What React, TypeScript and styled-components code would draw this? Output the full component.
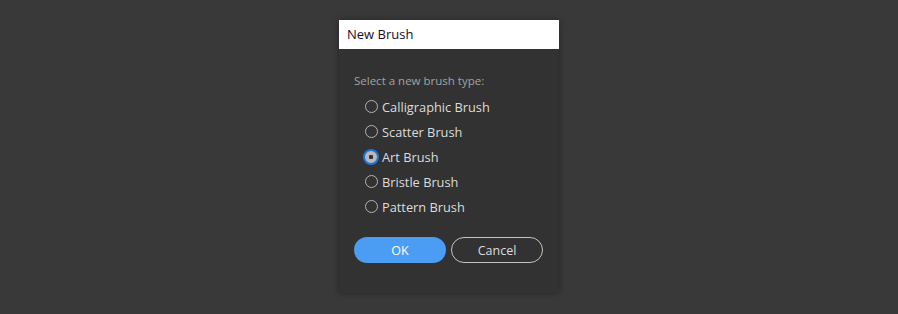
import { useState } from 'react'
import styled, { createGlobalStyle } from 'styled-components'

const BRUSH_TYPES = [
  'Calligraphic Brush',
  'Scatter Brush',
  'Art Brush',
  'Bristle Brush',
  'Pattern Brush',
]

const GlobalStyle = createGlobalStyle`
  html, body {
    margin: 0;
    padding: 0;
    background: #393939;
    font-family: 'Open Sans', 'Noto Sans', sans-serif;
  }
`

export default function App() {
  const [selected, setSelected] = useState('Art Brush')

  return (
    <Page>
      <GlobalStyle />
      <Dialog>
        <TitleBar>New Brush</TitleBar>
        <Body>
          <Prompt>Select a new brush type:</Prompt>
          <Options>
            {BRUSH_TYPES.map(type => (
              <Option key={type} onClick={() => setSelected(type)}>
                <Radio $checked={type === selected} />
                {type}
              </Option>
            ))}
          </Options>
          <Actions>
            <PrimaryBtn>OK</PrimaryBtn>
            <SecondaryBtn>Cancel</SecondaryBtn>
          </Actions>
        </Body>
      </Dialog>
    </Page>
  )
}

const Page = styled.div`
  width: 898px;
  height: 314px;
  display: flex;
  justify-content: center;
  padding-top: 20px;
  box-sizing: border-box;
`

const Dialog = styled.div`
  width: 220px;
  height: 273px;
  background: #323232;
  box-shadow: 0 0 6px rgba(0, 0, 0, 0.35);
  display: flex;
  flex-direction: column;
`

const TitleBar = styled.div`
  height: 29px;
  background: #fff;
  color: #1a0a2a;
  font-size: 13px;
  line-height: 29px;
  padding-left: 8px;
`

const Body = styled.div`
  padding: 23px 15px 0;
  display: flex;
  flex-direction: column;
`

const Prompt = styled.div`
  color: #a2a2a2;
  font-size: 11.5px;
  line-height: 18px;
`

const Options = styled.div`
  display: flex;
  flex-direction: column;
  margin-top: 4px;
  padding-left: 11px;
`

const Option = styled.label`
  display: flex;
  align-items: center;
  gap: 4px;
  height: 25px;
  color: #dcdcdc;
  font-size: 12.8px;
  cursor: pointer;
`

const Radio = styled.span<{ $checked: boolean }>`
  box-sizing: border-box;
  width: ${p => (p.$checked ? 16 : 13)}px;
  height: ${p => (p.$checked ? 16 : 13)}px;
  margin: ${p => (p.$checked ? '0 -1px 0 -2px' : '0')};
  border-radius: 50%;
  border: ${p => (p.$checked ? '2px solid #1a75e0' : '1px solid #b4b4b4')};
  background: ${p => (p.$checked ? 'radial-gradient(circle, #333 0 2px, #b9b9b9 2.5px)' : 'transparent')};
  flex-shrink: 0;
`

const Actions = styled.div`
  display: flex;
  gap: 5px;
  margin-top: 18px;
`

const PrimaryBtn = styled.button`
  width: 92px;
  height: 26px;
  border-radius: 13px;
  border: none;
  background: #4a9df3;
  color: #fff;
  font-family: 'Open Sans', 'Noto Sans', sans-serif;
  font-size: 12.5px;
  cursor: pointer;
`

const SecondaryBtn = styled.button`
  box-sizing: border-box;
  width: 92px;
  height: 26px;
  border-radius: 13px;
  border: 1.5px solid #c4c4c4;
  background: transparent;
  color: #dcdcdc;
  font-family: 'Open Sans', 'Noto Sans', sans-serif;
  font-size: 12.5px;
  cursor: pointer;
`
